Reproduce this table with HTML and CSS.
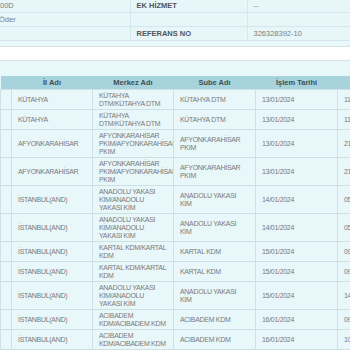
FILE: index.html
```html
<!DOCTYPE html>
<html lang="tr">
<head>
<meta charset="utf-8">
<link rel="stylesheet" href="styles.css">
</head>
<body>
<div class="page">
  <table class="info">
    <colgroup><col class="c-a"><col class="c-b"><col class="c-c"></colgroup>
    <tr><td class="val">00D</td><td class="lbl">EK HİZMET</td><td class="val">--</td></tr>
    <tr><td class="val shift">Öder</td><td></td><td></td></tr>
    <tr><td></td><td class="lbl">REFERANS NO</td><td class="val">326328392-10</td></tr>
  </table>
  <div class="blank"></div>
  <table class="grid">
    <colgroup><col class="g0"><col class="g1"><col class="g2"><col class="g3"><col class="g4"><col class="g5"></colgroup>
    <thead>
      <tr><th></th><th>İl Adı</th><th>Merkez Adı</th><th>Sube Adı</th><th>İşlem Tarihi</th><th>İşlem Saati</th></tr>
    </thead>
    <tbody>
      <tr><td></td><td>KÜTAHYA</td><td>KÜTAHYA DTM/KÜTAHYA DTM</td><td>KÜTAHYA DTM</td><td>13/01/2024</td><td>11:32</td></tr>
      <tr><td></td><td>KÜTAHYA</td><td>KÜTAHYA DTM/KÜTAHYA DTM</td><td>KÜTAHYA DTM</td><td>13/01/2024</td><td>11:45</td></tr>
      <tr><td></td><td>AFYONKARAHİSAR</td><td>AFYONKARAHİSAR PKIM/AFYONKARAHİSAR PKIM</td><td>AFYONKARAHİSAR PKIM</td><td>13/01/2024</td><td>21:10</td></tr>
      <tr><td></td><td>AFYONKARAHİSAR</td><td>AFYONKARAHİSAR PKIM/AFYONKARAHİSAR PKIM</td><td>AFYONKARAHİSAR PKIM</td><td>13/01/2024</td><td>21:40</td></tr>
      <tr><td></td><td>İSTANBUL(AND)</td><td>ANADOLU YAKASI KİM/ANADOLU YAKASI KİM</td><td>ANADOLU YAKASI KİM</td><td>14/01/2024</td><td>05:12</td></tr>
      <tr><td></td><td>İSTANBUL(AND)</td><td>ANADOLU YAKASI KİM/ANADOLU YAKASI KİM</td><td>ANADOLU YAKASI KİM</td><td>14/01/2024</td><td>05:30</td></tr>
      <tr><td></td><td>İSTANBUL(AND)</td><td>KARTAL KDM/KARTAL KDM</td><td>KARTAL KDM</td><td>15/01/2024</td><td>09:05</td></tr>
      <tr><td></td><td>İSTANBUL(AND)</td><td>KARTAL KDM/KARTAL KDM</td><td>KARTAL KDM</td><td>15/01/2024</td><td>09:20</td></tr>
      <tr><td></td><td>İSTANBUL(AND)</td><td>ANADOLU YAKASI KİM/ANADOLU YAKASI KİM</td><td>ANADOLU YAKASI KİM</td><td>15/01/2024</td><td>14:15</td></tr>
      <tr><td></td><td>İSTANBUL(AND)</td><td>ACIBADEM KDM/ACIBADEM KDM</td><td>ACIBADEM KDM</td><td>16/01/2024</td><td>09:50</td></tr>
      <tr><td></td><td>İSTANBUL(AND)</td><td>ACIBADEM KDM/ACIBADEM KDM</td><td>ACIBADEM KDM</td><td>16/01/2024</td><td>10:05</td></tr>
    </tbody>
  </table>
</div>
</body>
</html>
```
FILE: styles.css
```css
html, body {
  margin: 0;
  padding: 0;
  background: #e8f7fa;
}
body {
  font-family: "Liberation Sans", Arial, sans-serif;
  font-size: 7px;
  color: #6e6e6e;
  overflow: hidden;
}
.page {
  width: 420px;
}
.info {
  border-collapse: collapse;
  table-layout: fixed;
  width: 420px;
  margin-top: -1px;
  font-size: 7.5px;
}
.info .c-a { width: 130px; }
.info .c-b { width: 117px; }
.info .c-c { width: 173px; }
.info td {
  height: 13px;
  padding: 0 0 0 6px;
  border-bottom: 1px solid #d4e7ea;
  border-left: 1px solid #d4e7ea;
  background: #e6f6f9;
  white-space: nowrap;
  vertical-align: middle;
}
.info td:first-child {
  border-left: none;
  padding-left: 0;
}
.info td.shift { text-indent: -1px; }
.info .lbl {
  font-weight: bold;
  color: #555;
}
.info .val { color: #808080; }
.blank {
  margin-top: 5px;
  height: 13px;
  background: #fff;
  border-top: 1px solid #d8e2e4;
  border-bottom: 1px solid #d8e2e4;
  margin-bottom: 15px;
}
.grid {
  border-collapse: collapse;
  table-layout: fixed;
  width: 426px;
}
.grid .g0 { width: 11px; }
.grid .g1 { width: 81px; }
.grid .g2 { width: 81px; }
.grid .g3 { width: 82px; }
.grid .g4 { width: 82px; }
.grid .g5 { width: 89px; }
.grid th {
  background: #a7d3dc;
  color: #3f4f55;
  font-size: 7.5px;
  font-weight: bold;
  height: 13px;
  padding: 0;
  text-align: center;
  border-bottom: 1px solid #cfe3e6;
}
.grid td {
  background: #e8f7fa;
  border: 1px solid #cde1e4;
  padding: 1.5px 6px;
  line-height: 8px;
  letter-spacing: -0.3px;
  vertical-align: middle;
  color: #7a7a7a;
  overflow: hidden;
}
.grid td:first-child {
  padding: 0;
}
```
